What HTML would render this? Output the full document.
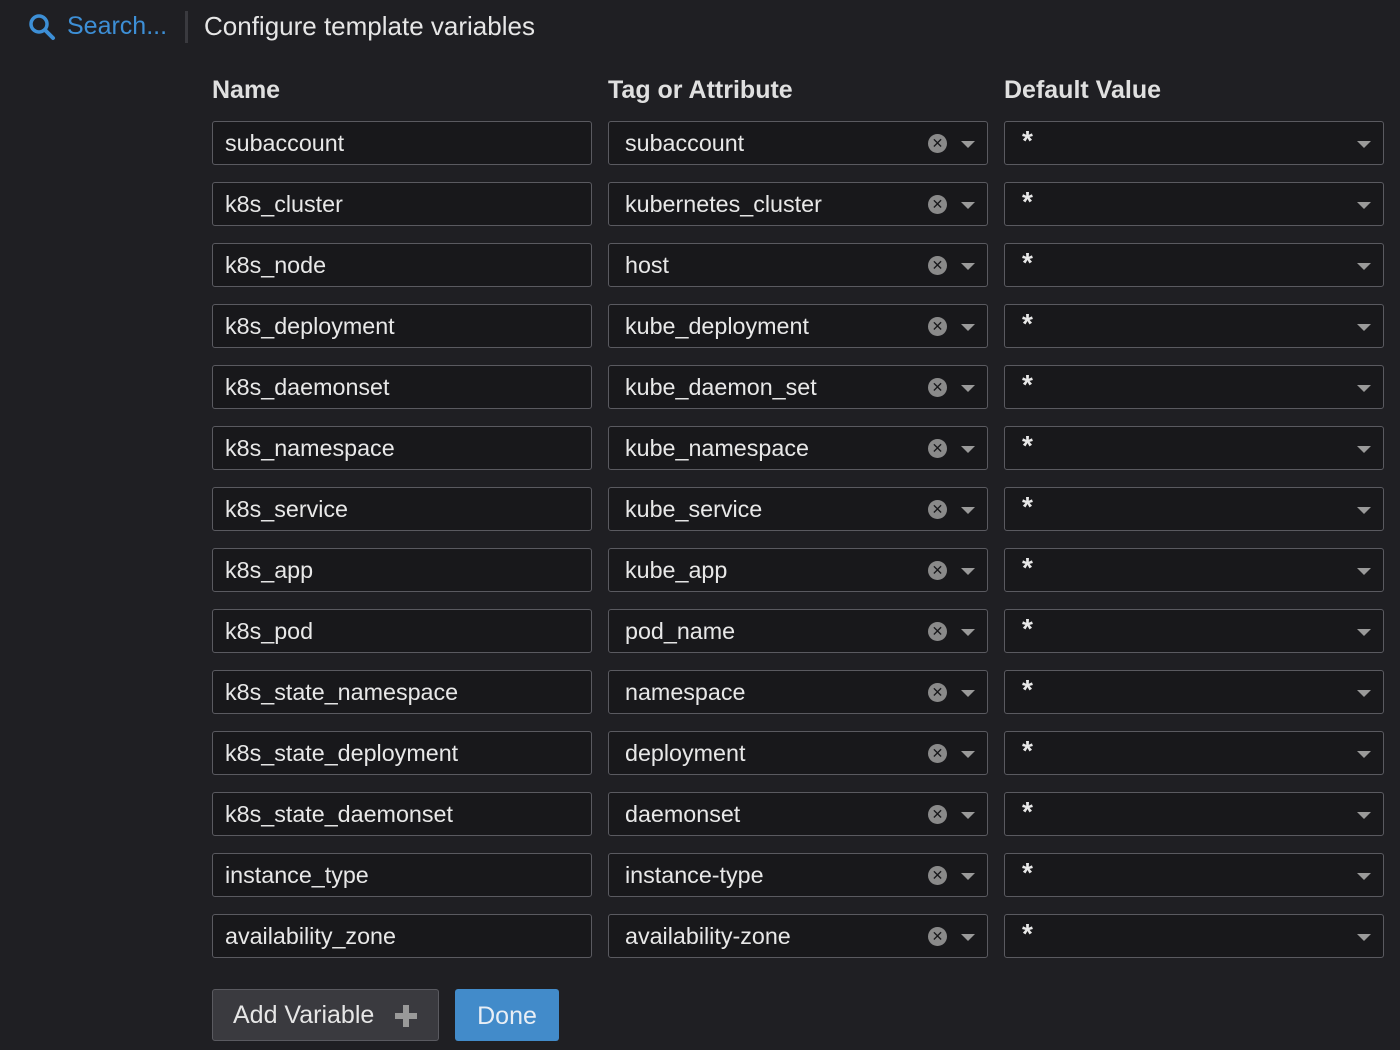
<!DOCTYPE html>
<html><head><style>
body{margin:0;width:1400px;height:1050px;background:#1f1f23;font-family:"Liberation Sans","DejaVu Sans",sans-serif;color:#e6e6e6;position:relative;overflow:hidden}
.abs{position:absolute}
.box{position:absolute;height:44px;border:1px solid #5a5a60;border-radius:3px;background:#18181b;box-sizing:border-box;font-size:23.3px;line-height:42px;padding-left:12px;color:#e8e8e8}
.h{position:absolute;top:76px;font-size:25px;font-weight:bold;color:#e0e0e0}
.x{position:absolute;right:40px;top:12px;width:19px;height:19px;border-radius:50%;background:#8a8a8a;color:#18181b;font-size:14px;line-height:19px;text-align:center;font-weight:bold}
.tri{position:absolute;right:12px;top:19px;width:0;height:0;border-left:7px solid transparent;border-right:7px solid transparent;border-top:7px solid #9a9a9a}
.st{font-size:28px;font-weight:bold;line-height:38px}
</style></head><body>
<svg class="abs" style="left:28px;top:13px" width="28" height="28" viewBox="0 0 28 28"><circle cx="11" cy="11" r="8" fill="none" stroke="#3d8fd6" stroke-width="3.5"/><line x1="17" y1="17" x2="25" y2="25" stroke="#3d8fd6" stroke-width="4" stroke-linecap="round"/></svg>
<div class="abs" style="left:67px;top:12px;font-size:25px;color:#3d8fd6">Search...</div>
<div class="abs" style="left:185px;top:11px;width:3px;height:32px;background:#3a3a3f"></div>
<div class="abs" style="left:204px;top:11px;font-size:26px;color:#e6e6e6">Configure template variables</div>
<div class="h" style="left:212px">Name</div>
<div class="h" style="left:608px">Tag or Attribute</div>
<div class="h" style="left:1004px">Default Value</div>
<div id="rows"></div>
<div class="abs" style="left:212px;top:989px;width:227px;height:52px;box-sizing:border-box;border:1px solid #5a5a60;border-radius:3px;background:#3a3a3f;font-size:25px;line-height:50px;padding-left:20px;color:#e6e6e6">Add Variable</div>
<svg class="abs" style="left:394px;top:1004px" width="24" height="24" viewBox="0 0 24 24"><rect x="9" y="1" width="6" height="22" fill="#999"/><rect x="1" y="9" width="22" height="6" fill="#999"/></svg>
<div class="abs" style="left:455px;top:989px;width:104px;height:52px;box-sizing:border-box;border-radius:3px;background:#428bca;font-size:25px;line-height:54px;text-align:center;color:#e8eef5">Done</div>
<script>
var d=[["subaccount","subaccount"],["k8s_cluster","kubernetes_cluster"],["k8s_node","host"],["k8s_deployment","kube_deployment"],["k8s_daemonset","kube_daemon_set"],["k8s_namespace","kube_namespace"],["k8s_service","kube_service"],["k8s_app","kube_app"],["k8s_pod","pod_name"],["k8s_state_namespace","namespace"],["k8s_state_deployment","deployment"],["k8s_state_daemonset","daemonset"],["instance_type","instance-type"],["availability_zone","availability-zone"]];
var h="";d.forEach(function(r,i){var t=121+i*61;
h+='<div class="box" style="left:212px;top:'+t+'px;width:380px">'+r[0]+'</div>';
h+='<div class="box" style="left:608px;top:'+t+'px;width:380px;padding-left:16px">'+r[1]+'<div class="x">✕</div><div class="tri"></div></div>';
h+='<div class="box st" style="left:1004px;top:'+t+'px;width:380px;padding-left:17px">*<div class="tri"></div></div>';});
document.getElementById("rows").innerHTML=h;
</script>
</body></html>
